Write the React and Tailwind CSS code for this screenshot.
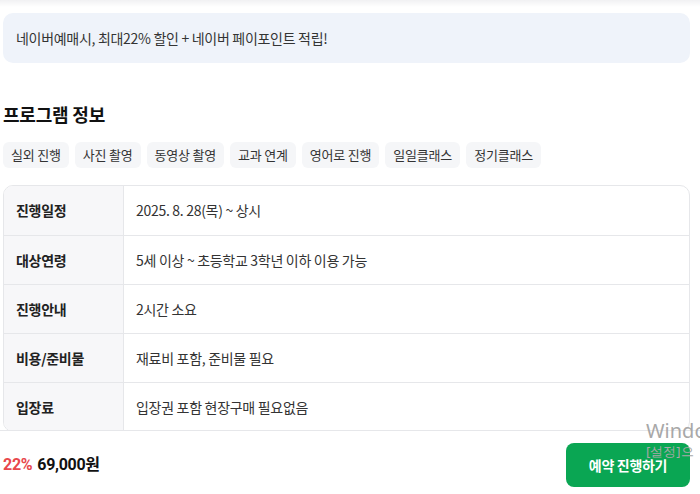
import React from 'react';

const tags = ['실외 진행', '사진 촬영', '동영상 촬영', '교과 연계', '영어로 진행', '일일클래스', '정기클래스'];

const rows = [
  ['진행일정', '2025. 8. 28(목) ~ 상시'],
  ['대상연령', '5세 이상 ~ 초등학교 3학년 이하 이용 가능'],
  ['진행안내', '2시간 소요'],
  ['비용/준비물', '재료비 포함, 준비물 필요'],
  ['입장료', '입장권 포함 현장구매 필요없음'],
];

export default function App() {
  return (
    <div
      className="relative h-[494px] w-[700px] flex flex-col overflow-hidden bg-white text-[#222]"
      style={{ fontFamily: '"Noto Sans CJK KR", "Noto Sans", sans-serif' }}
    >
      <div className="flex-1 overflow-hidden">
        <div className="h-[7px] bg-gradient-to-b from-[#f1f1f3] to-white" />
        <div className="pl-[3px] pr-[10px]">
          <div className="mt-[6px] h-[50px] flex items-center rounded-[10px] bg-[#eff3fa] px-[13px] text-[14px] text-[#333] tracking-[-0.3px]">
            네이버예매시, 최대22% 할인 + 네이버 페이포인트 적립!
          </div>

          <h2 className="mt-[38px] text-[18px] font-bold leading-[26px] tracking-[-0.2px] text-[#111]">프로그램 정보</h2>

          <div className="mt-[15px] flex gap-[6px]">
            {tags.map((t) => (
              <span key={t} className="h-[26px] flex items-center rounded-[6px] bg-[#f5f6f8] px-[8px] text-[13px] text-[#333] tracking-[-0.2px]">
                {t}
              </span>
            ))}
          </div>

          <div className="mt-[17px] rounded-[10px] border border-[#e6e7ea] overflow-hidden">
            {rows.map(([k, v], i) => (
              <div key={k} className={`flex h-[49px] ${i > 0 ? 'border-t border-[#e6e7ea]' : ''}`}>
                <div className="w-[120px] shrink-0 flex items-center bg-[#f7f7f9] border-r border-[#e6e7ea] pl-[12px] text-[14px] font-bold text-[#222] tracking-[-0.3px]">
                  {k}
                </div>
                <div className="flex items-center pl-[12px] text-[14px] text-[#333] tracking-[-0.3px]">{v}</div>
              </div>
            ))}
          </div>
        </div>
      </div>

      <div className="h-[64px] shrink-0 border-t border-[#e6e7ea] bg-white flex items-center justify-between pl-[3px] pr-[10px] pt-[5px]">
        <div className="flex items-center gap-[5px] text-[16px] font-bold tracking-[-0.3px]" style={{ fontFamily: 'Roboto, "Noto Sans CJK KR", sans-serif' }}>
          <span className="text-[#e8474c]">22%</span>
          <span className="text-[#111]">69,000원</span>
        </div>
        <button className="h-[44px] w-[124px] rounded-[8px] bg-[#0aa653] text-white text-[14px] font-bold tracking-[-0.3px]">
          예약 진행하기
        </button>
      </div>

      <div className="pointer-events-none absolute left-[646px] top-[421px] leading-none text-[#a8a8a8]" style={{ fontFamily: '"Noto Sans", sans-serif' }}>
        <div className="text-[20px]">Windo</div>
        <div className="mt-[4px] text-[13px]">[설정]으</div>
      </div>
    </div>
  );
}
